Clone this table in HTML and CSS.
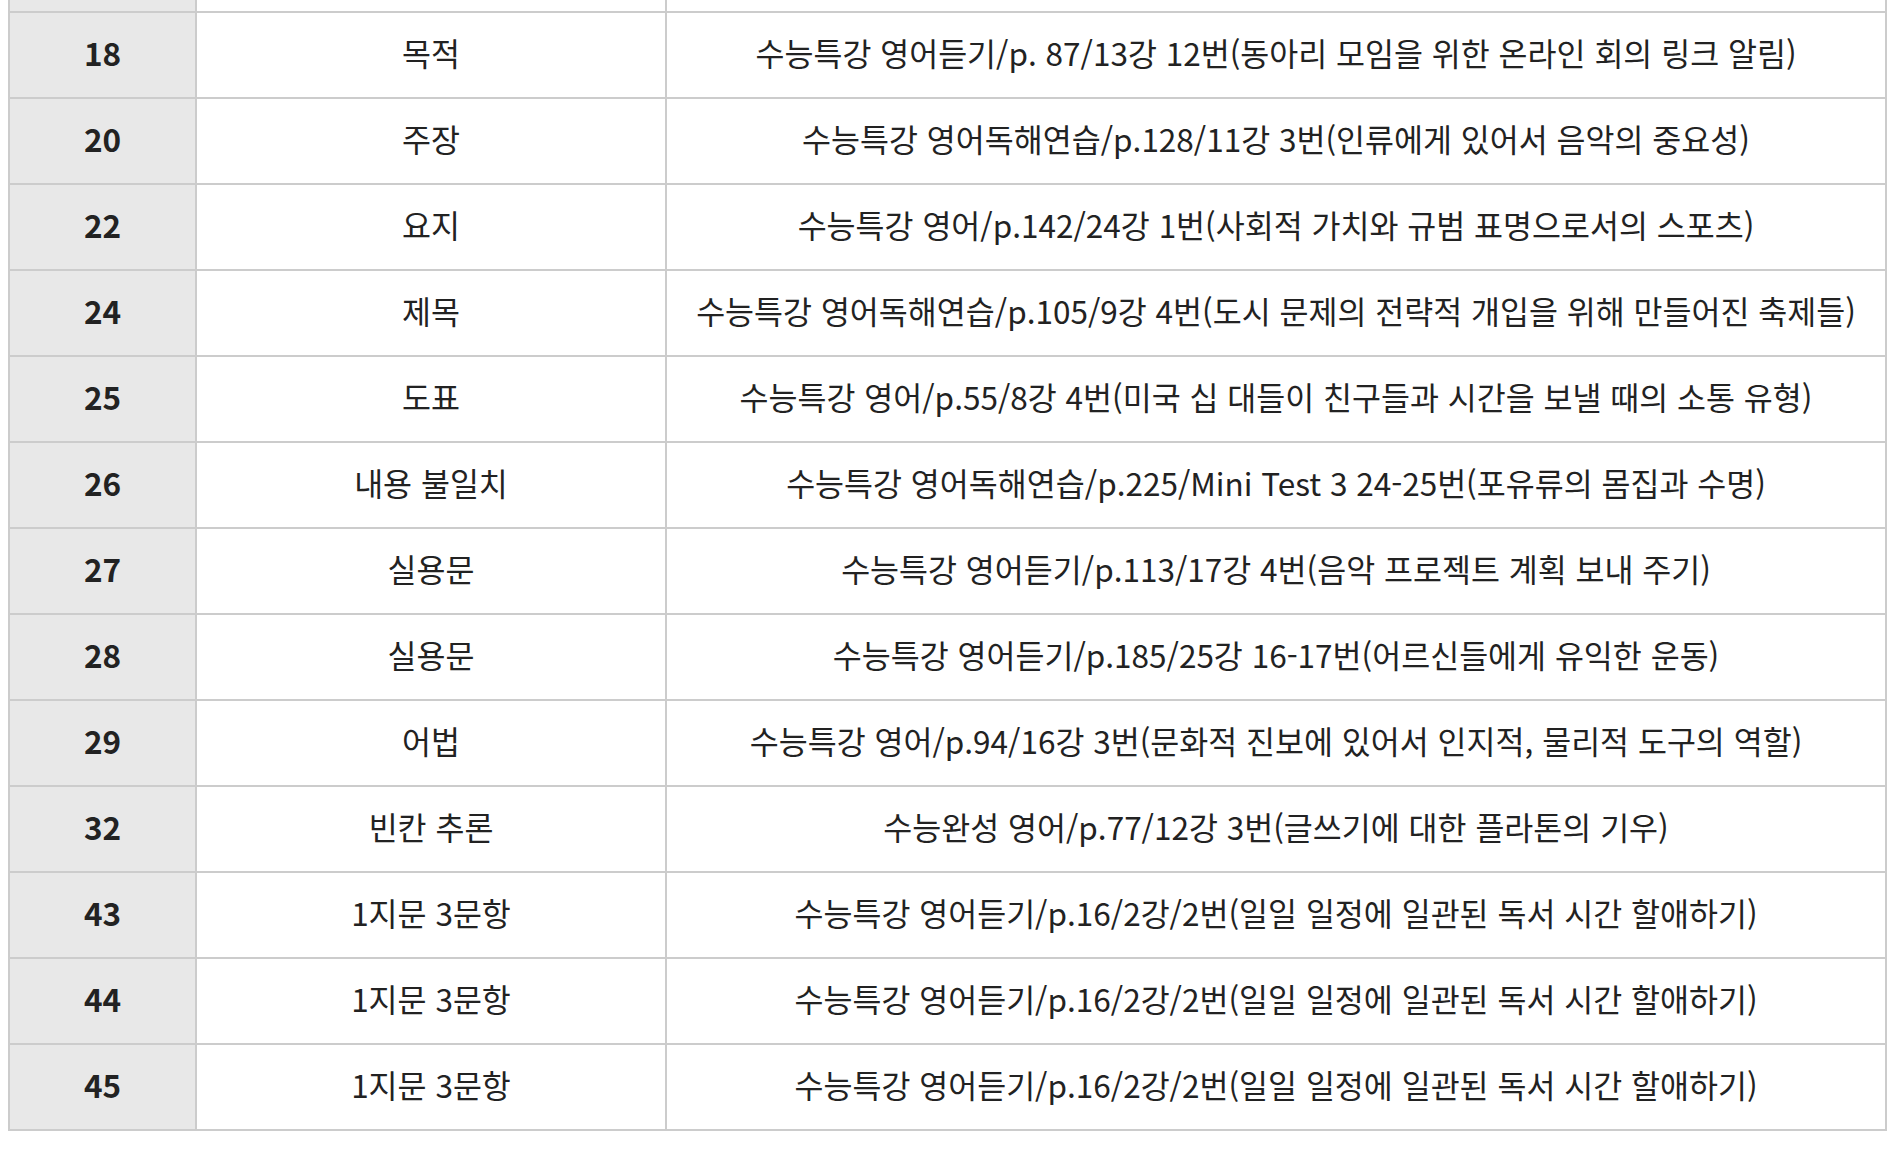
FILE: index.html
```html
<!DOCTYPE html>
<html lang="ko">
<head>
<meta charset="utf-8">
<title>출제 연계 문항</title>
<link rel="stylesheet" href="styles.css">
</head>
<body>
<table class="link-table">
  <colgroup>
    <col class="col-num">
    <col class="col-type">
    <col class="col-source">
  </colgroup>
  <tbody>
    <tr class="row-cut"><td class="num"></td><td></td><td></td></tr>
    <tr><td class="num">18</td><td>목적</td><td>수능특강 영어듣기/p. 87/13강 12번(동아리 모임을 위한 온라인 회의 링크 알림)</td></tr>
    <tr><td class="num">20</td><td>주장</td><td>수능특강 영어독해연습/p.128/11강 3번(인류에게 있어서 음악의 중요성)</td></tr>
    <tr><td class="num">22</td><td>요지</td><td>수능특강 영어/p.142/24강 1번(사회적 가치와 규범 표명으로서의 스포츠)</td></tr>
    <tr><td class="num">24</td><td>제목</td><td>수능특강 영어독해연습/p.105/9강 4번(도시 문제의 전략적 개입을 위해 만들어진 축제들)</td></tr>
    <tr><td class="num">25</td><td>도표</td><td>수능특강 영어/p.55/8강 4번(미국 십 대들이 친구들과 시간을 보낼 때의 소통 유형)</td></tr>
    <tr><td class="num">26</td><td>내용 불일치</td><td>수능특강 영어독해연습/p.225/Mini Test 3 24-25번(포유류의 몸집과 수명)</td></tr>
    <tr><td class="num">27</td><td>실용문</td><td>수능특강 영어듣기/p.113/17강 4번(음악 프로젝트 계획 보내 주기)</td></tr>
    <tr><td class="num">28</td><td>실용문</td><td>수능특강 영어듣기/p.185/25강 16-17번(어르신들에게 유익한 운동)</td></tr>
    <tr><td class="num">29</td><td>어법</td><td>수능특강 영어/p.94/16강 3번(문화적 진보에 있어서 인지적, 물리적 도구의 역할)</td></tr>
    <tr><td class="num">32</td><td>빈칸 추론</td><td>수능완성 영어/p.77/12강 3번(글쓰기에 대한 플라톤의 기우)</td></tr>
    <tr><td class="num">43</td><td>1지문 3문항</td><td>수능특강 영어듣기/p.16/2강/2번(일일 일정에 일관된 독서 시간 할애하기)</td></tr>
    <tr><td class="num">44</td><td>1지문 3문항</td><td>수능특강 영어듣기/p.16/2강/2번(일일 일정에 일관된 독서 시간 할애하기)</td></tr>
    <tr><td class="num">45</td><td>1지문 3문항</td><td>수능특강 영어듣기/p.16/2강/2번(일일 일정에 일관된 독서 시간 할애하기)</td></tr>
  </tbody>
</table>
</body>
</html>
```

FILE: styles.css
```css
html, body {
  background: #ffffff;
}

body {
  margin: 0 8px;
  font-family: "Noto Sans CJK KR", "Noto Sans", sans-serif;
  color: #222222;
}

.link-table {
  width: 1879px;
  table-layout: fixed;
  border-collapse: separate;
  border-spacing: 0;
  border-left: 2px solid #cccccc;
}

.col-num { width: 187px; }
.col-type { width: 470px; }
.col-source { width: 1220px; }

.link-table td {
  box-sizing: content-box;
  height: 78px;
  padding: 0 0 6px 0;
  border-right: 2px solid #cccccc;
  border-bottom: 2px solid #cccccc;
  text-align: center;
  vertical-align: middle;
  font-size: 31.5px;
  line-height: 1.3;
  white-space: nowrap;
  background: #ffffff;
}

.link-table td.num {
  background: #e8e8e8;
  font-weight: 700;
}

.link-table .row-cut td {
  height: 11px;
  padding: 0;
  line-height: 0;
  font-size: 0;
}
```
